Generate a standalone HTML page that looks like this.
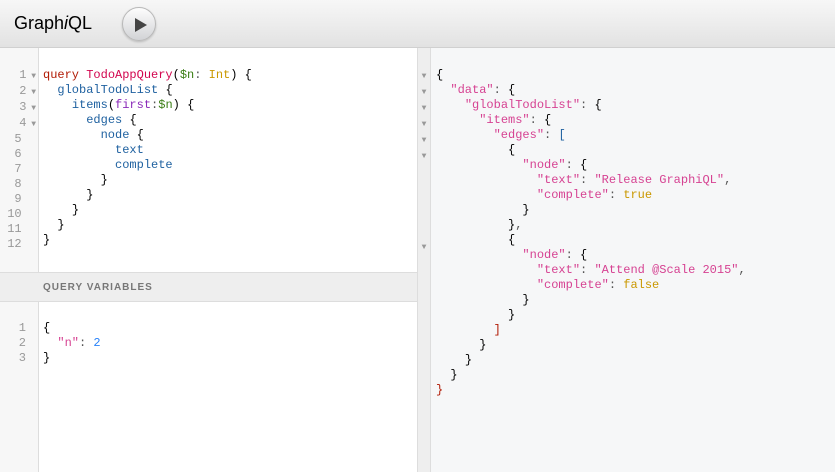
<!DOCTYPE html>
<html><head><style>
*{margin:0;padding:0;box-sizing:border-box}
body{width:835px;height:472px;overflow:hidden;font-family:"Liberation Sans",sans-serif;background:#fff;position:relative}
.top{position:absolute;left:0;top:0;width:835px;height:48px;background:linear-gradient(#f7f7f7,#e2e2e2);border-bottom:1px solid #d0d0d0}
.logo{position:absolute;left:14px;top:13px;font-size:18px;color:#000}
.btn{position:absolute;left:122px;top:7px;width:34px;height:34px;border-radius:50%;border:1px solid #b8b8b8;background:linear-gradient(#fdfdfd,#d2d3d6);box-shadow:0 1px 2px rgba(0,0,0,.2)}
.btn svg{position:absolute;left:11px;top:9px}
.code{position:absolute;font-family:"Liberation Mono",monospace;font-size:12px;line-height:15px;white-space:pre;color:#555}
.gut{position:absolute;background:#f7f7f7;border-right:1px solid #ddd}
.ln{position:absolute;font-family:"Liberation Mono",monospace;font-size:12px;line-height:15px;white-space:pre;color:#999;text-align:right}
.ar{color:#999;font-size:8px}
.k{color:#b11a04}.d{color:#d2054e}.v{color:#397d13}.t{color:#ca9800}.p{color:#1f61a0}.a{color:#8b2bb9}
.s{color:#d64292}.n{color:#2882f9}.b{color:#000}
</style></head><body>
<div class="top"><div class="logo">Graph<i>i</i>QL</div>
<div class="btn"><svg width="14" height="16" viewBox="0 0 14 16"><path d="M1 1 L13 8 L1 15 Z" fill="#444"/></svg></div></div>

<div class="gut" style="left:0;top:48px;width:39px;height:224px"></div>
<div class="ln" style="left:4px;top:68px;width:32px">1<span class="ar"> ▼</span>
2<span class="ar"> ▼</span>
3<span class="ar"> ▼</span>
4<span class="ar"> ▼</span>
5  
6  
7  
8  
9  
10  
11  
12  </div>
<div class="code" style="left:43px;top:68px"><span class="k">query</span> <span class="d">TodoAppQuery</span><span class="b">(</span><span class="v">$n</span>: <span class="t">Int</span><span class="b">)</span> <span class="b">{</span>
  <span class="p">globalTodoList</span> <span class="b">{</span>
    <span class="p">items</span><span class="b">(</span><span class="a">first</span>:<span class="v">$n</span><span class="b">)</span> <span class="b">{</span>
      <span class="p">edges</span> <span class="b">{</span>
        <span class="p">node</span> <span class="b">{</span>
          <span class="p">text</span>
          <span class="p">complete</span>
        <span class="b">}</span>
      <span class="b">}</span>
    <span class="b">}</span>
  <span class="b">}</span>
<span class="b">}</span></div>

<div style="position:absolute;left:0;top:272px;width:418px;height:30px;background:#eee;border-top:1px solid #ddd;border-bottom:1px solid #ddd"></div>
<div style="position:absolute;left:43px;top:282px;font-size:10px;font-weight:bold;letter-spacing:1px;color:#777">QUERY VARIABLES</div>

<div class="gut" style="left:0;top:302px;width:39px;height:170px"></div>
<div class="ln" style="left:4px;top:321px;width:22px">1
2
3</div>
<div class="code" style="left:43px;top:321px"><span class="b">{</span>
  <span class="s">"n"</span>: <span class="n">2</span>
<span class="b">}</span></div>

<div style="position:absolute;left:417px;top:48px;width:14px;height:424px;background:#eee;border-left:1px solid #ddd;border-right:1px solid #ddd"></div>
<div style="position:absolute;left:431px;top:48px;width:404px;height:424px;background:#f6f7f8"></div>
<div class="ln" style="left:419px;top:68px;width:10px;text-align:center"><span class="ar">▼</span>
<span class="ar">▼</span>
<span class="ar">▼</span>
<span class="ar">▼</span>
<span class="ar">▼</span>
<span class="ar">▼</span>
 
 
 
 
 
<span class="ar">▼</span></div>
<div class="code" style="left:436px;top:68px"><span class="b">{</span>
  <span class="s">"data"</span>: <span class="b">{</span>
    <span class="s">"globalTodoList"</span>: <span class="b">{</span>
      <span class="s">"items"</span>: <span class="b">{</span>
        <span class="s">"edges"</span>: <span class="p">[</span>
          <span class="b">{</span>
            <span class="s">"node"</span>: <span class="b">{</span>
              <span class="s">"text"</span>: <span class="s">"Release GraphiQL"</span>,
              <span class="s">"complete"</span>: <span class="t">true</span>
            <span class="b">}</span>
          <span class="b">}</span>,
          <span class="b">{</span>
            <span class="s">"node"</span>: <span class="b">{</span>
              <span class="s">"text"</span>: <span class="s">"Attend @Scale 2015"</span>,
              <span class="s">"complete"</span>: <span class="t">false</span>
            <span class="b">}</span>
          <span class="b">}</span>
        <span class="k">]</span>
      <span class="b">}</span>
    <span class="b">}</span>
  <span class="b">}</span>
<span class="k">}</span></div>
</body></html>
